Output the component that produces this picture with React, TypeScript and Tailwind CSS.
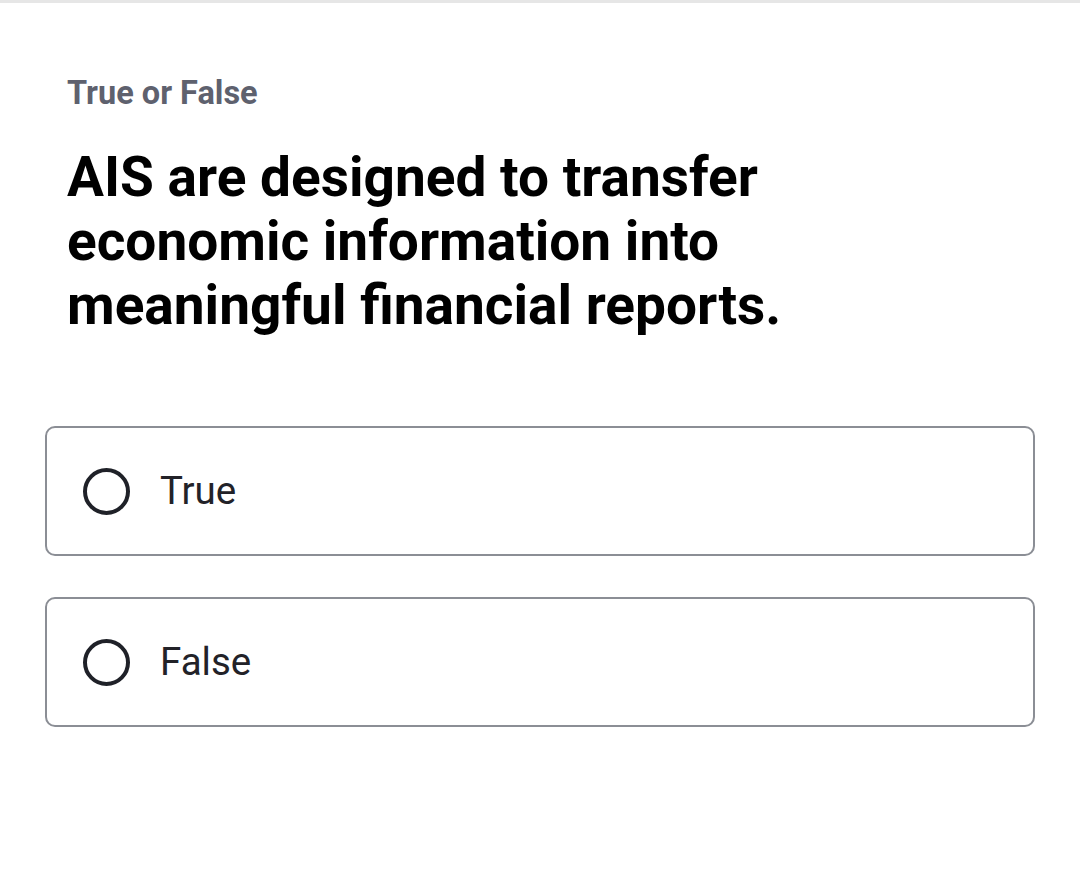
const options = ["True", "False"];

export default function App() {
  return (
    <main
      className="min-h-screen bg-white border-t-[3px] border-[#e6e6e6]"
      style={{ fontFamily: "Roboto, 'Noto Sans', sans-serif" }}
    >
      <section className="px-[45px] pt-[72px]">
        <div className="pl-[22px]">
          <p className="text-[32.5px] leading-[36px] font-bold text-[#5e616e]">True or False</p>
          <h1 className="mt-[34px] max-w-[800px] text-[55px] leading-[64px] font-bold text-black">
            AIS are designed to transfer economic information into meaningful financial reports.
          </h1>
        </div>

        <div className="mt-[89px] flex flex-col gap-[41px]">
          {options.map((o) => (
            <label
              key={o}
              className="flex h-[130px] items-center gap-[30px] rounded-[10px] border-2 border-[#8b8e95] px-[36px]"
            >
              <span className="h-[47px] w-[47px] rounded-full border-[4px] border-[#1f2128]" />
              <span className="text-[38.5px] text-[#222228]">{o}</span>
            </label>
          ))}
        </div>
      </section>
    </main>
  );
}
